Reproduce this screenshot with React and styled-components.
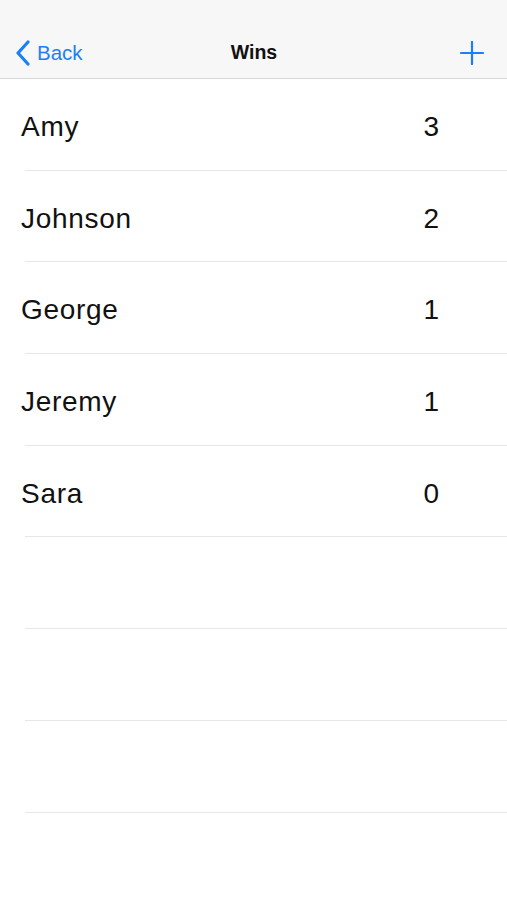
import React from 'react';
import styled, { createGlobalStyle } from 'styled-components';

const players = [
    { name: 'Amy', wins: 3 },
    { name: 'Johnson', wins: 2 },
    { name: 'George', wins: 1 },
    { name: 'Jeremy', wins: 1 },
    { name: 'Sara', wins: 0 },
];

const EMPTY_ROWS = 3;

const GlobalStyle = createGlobalStyle`
    html, body {
        margin: 0;
        padding: 0;
        background: #ffffff;
    }
    body {
        font-family: "Liberation Sans", Arial, sans-serif;
        -webkit-font-smoothing: antialiased;
    }
`;

const App = () => (
    <>
        <GlobalStyle />
        <Screen>
            <NavBar>
                <BackButton>
                    <svg width="18" height="26" viewBox="0 0 18 26" fill="none">
                        <path d="M14 2 L4 13 L14 24" stroke="#1a7ff8" strokeWidth="3.2" strokeLinecap="round" strokeLinejoin="round" />
                    </svg>
                    <BackLabel>Back</BackLabel>
                </BackButton>
                <Title>Wins</Title>
                <AddButton>
                    <svg width="24" height="24" viewBox="0 0 24 24" fill="none">
                        <path d="M12 1 V23 M1 12 H23" stroke="#1a7ff8" strokeWidth="2.2" strokeLinecap="round" />
                    </svg>
                </AddButton>
            </NavBar>
            <List>
                {players.map((p) => (
                    <Row key={p.name}>
                        <Name>{p.name}</Name>
                        <Wins>{p.wins}</Wins>
                    </Row>
                ))}
                {Array.from({ length: EMPTY_ROWS }).map((_, i) => (
                    <Row key={`empty-${i}`} />
                ))}
            </List>
        </Screen>
    </>
);

const Screen = styled.div`
    width: 507px;
    height: 900px;
    background: #ffffff;
    display: flex;
    flex-direction: column;
    overflow: hidden;
`;

const NavBar = styled.header`
    height: 79px;
    flex-shrink: 0;
    box-sizing: border-box;
    padding: 27px 23px 0 14px;
    background: #f7f7f7;
    border-bottom: 1px solid #dadada;
    display: grid;
    grid-template-columns: 1fr auto 1fr;
    align-items: center;
`;

const BackButton = styled.div`
    display: flex;
    align-items: center;
    gap: 5px;
    color: #1a7ff8;
`;

const BackLabel = styled.span`
    font-size: 20.5px;
`;

const Title = styled.div`
    font-size: 19.5px;
    font-weight: bold;
    color: #111111;
    padding-left: 10px;
`;

const AddButton = styled.div`
    display: flex;
    justify-content: flex-end;
`;

const List = styled.div`
    display: flex;
    flex-direction: column;
`;

const Row = styled.div`
    height: 91.7px;
    box-sizing: border-box;
    margin-left: 25px;
    padding: 5px 68px 0 0;
    border-bottom: 1px solid #e6e6e6;
    display: flex;
    align-items: center;
    justify-content: space-between;
    flex-shrink: 0;
`;

const Name = styled.span`
    margin-left: -4px;
    font-size: 28px;
    letter-spacing: 0.7px;
    color: #111111;
`;

const Wins = styled.span`
    font-size: 28px;
    color: #111111;
`;

export default App;
